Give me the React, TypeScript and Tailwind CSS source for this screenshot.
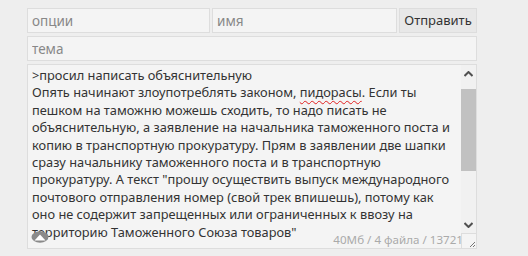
import React from "react";

const lines: React.ReactNode[] = [
  ">просил написать объяснительную",
  <>
    Опять начинают злоупотреблять законом,{" "}
    <span className="underline decoration-wavy decoration-[#e02020] decoration-1 underline-offset-[3px]">пидорасы</span>. Если ты
  </>,
  "пешком на таможню можешь сходить, то надо писать не",
  "объяснительную, а заявление на начальника таможенного поста и",
  "копию в транспортную прокуратуру. Прям в заявлении две шапки",
  "сразу начальнику таможенного поста и в транспортную",
  "прокуратуру. А текст \"прошу осуществить выпуск международного",
  "почтового отправления номер (свой трек впишешь), потому как",
  "оно не содержит запрещенных или ограниченных к ввозу на",
  "территорию Таможенного Союза товаров\"",
];

export default function App() {
  return (
    <div className="w-[528px] h-[256px] bg-[#eeeeee] pl-[27px] pt-[8px] overflow-hidden font-['Noto_Sans',sans-serif]">
      <div className="w-[450px] flex flex-col gap-[3px]">
        <div className="flex gap-[2px] h-[25px]">
          <input
            className="w-[183px] h-[25px] bg-[#f4f4f4] border border-[#dddddd] px-[4px] text-[13.5px] text-[#333] placeholder:text-[#888] outline-none"
            placeholder="опции"
          />
          <input
            className="w-[185px] h-[25px] bg-[#f4f4f4] border border-[#dddddd] px-[4px] text-[13.5px] text-[#333] placeholder:text-[#888] outline-none"
            placeholder="имя"
          />
          <button className="w-[78px] h-[25px] bg-[#e8e8e8] border border-[#dddddd] text-[13px] text-[#333] flex items-center justify-center">
            Отправить
          </button>
        </div>
        <input
          className="w-[450px] h-[25px] bg-[#f4f4f4] border border-[#dddddd] px-[4px] text-[13.5px] text-[#333] placeholder:text-[#888] outline-none"
          placeholder="тема"
        />
        <div className="relative w-[450px] h-[185px] bg-[#f4f4f4] border border-[#dddddd] flex overflow-hidden">
          <div className="flex-1 pl-[4px] pt-[2px] text-[12.8px] leading-[17.4px] text-[#333] whitespace-nowrap overflow-hidden">
            {lines.map((l, i) => (
              <div key={i}>{l}</div>
            ))}
          </div>
          <div className="w-[15px] h-full bg-[#f1f1f1] flex flex-col items-center">
            <div className="h-[17px] w-full flex items-center justify-center">
              <svg width="9" height="6" viewBox="0 0 9 6">
                <path d="M0.5 5 L4.5 1 L8.5 5" fill="none" stroke="#505050" strokeWidth="2" />
              </svg>
            </div>
            <div className="h-[7px]" />
            <div className="w-full h-[82px] bg-[#c1c1c1]" />
            <div className="flex-1" />
            <div className="h-[17px] w-full flex items-center justify-center">
              <svg width="9" height="6" viewBox="0 0 9 6">
                <path d="M0.5 1 L4.5 5 L8.5 1" fill="none" stroke="#505050" strokeWidth="2" />
              </svg>
            </div>
            <div className="h-[15px] w-full flex items-end justify-end bg-[#f4f4f4] border-l border-t border-[#dddddd]">
              <svg width="8" height="8" viewBox="0 0 8 8">
                <path d="M7 2 L2 7 M7 5 L5 7" stroke="#777" strokeWidth="1" />
              </svg>
            </div>
          </div>
          <div className="absolute right-[13px] bottom-[1px] text-[11.6px] leading-[15px] text-[#aaaaaa]">
            40Мб / 4 файла / 13721
          </div>
          <div className="absolute left-[3px] bottom-[5px]">
            <svg width="18" height="12" viewBox="0 0 18 12">
              <ellipse cx="9" cy="6" rx="8.5" ry="5.8" fill="#8a8a8a" />
              <path d="M3.5 9.5 L9 3.5 L14.5 9.5 Z" fill="#ffffff" />
            </svg>
          </div>
        </div>
      </div>
    </div>
  );
}
